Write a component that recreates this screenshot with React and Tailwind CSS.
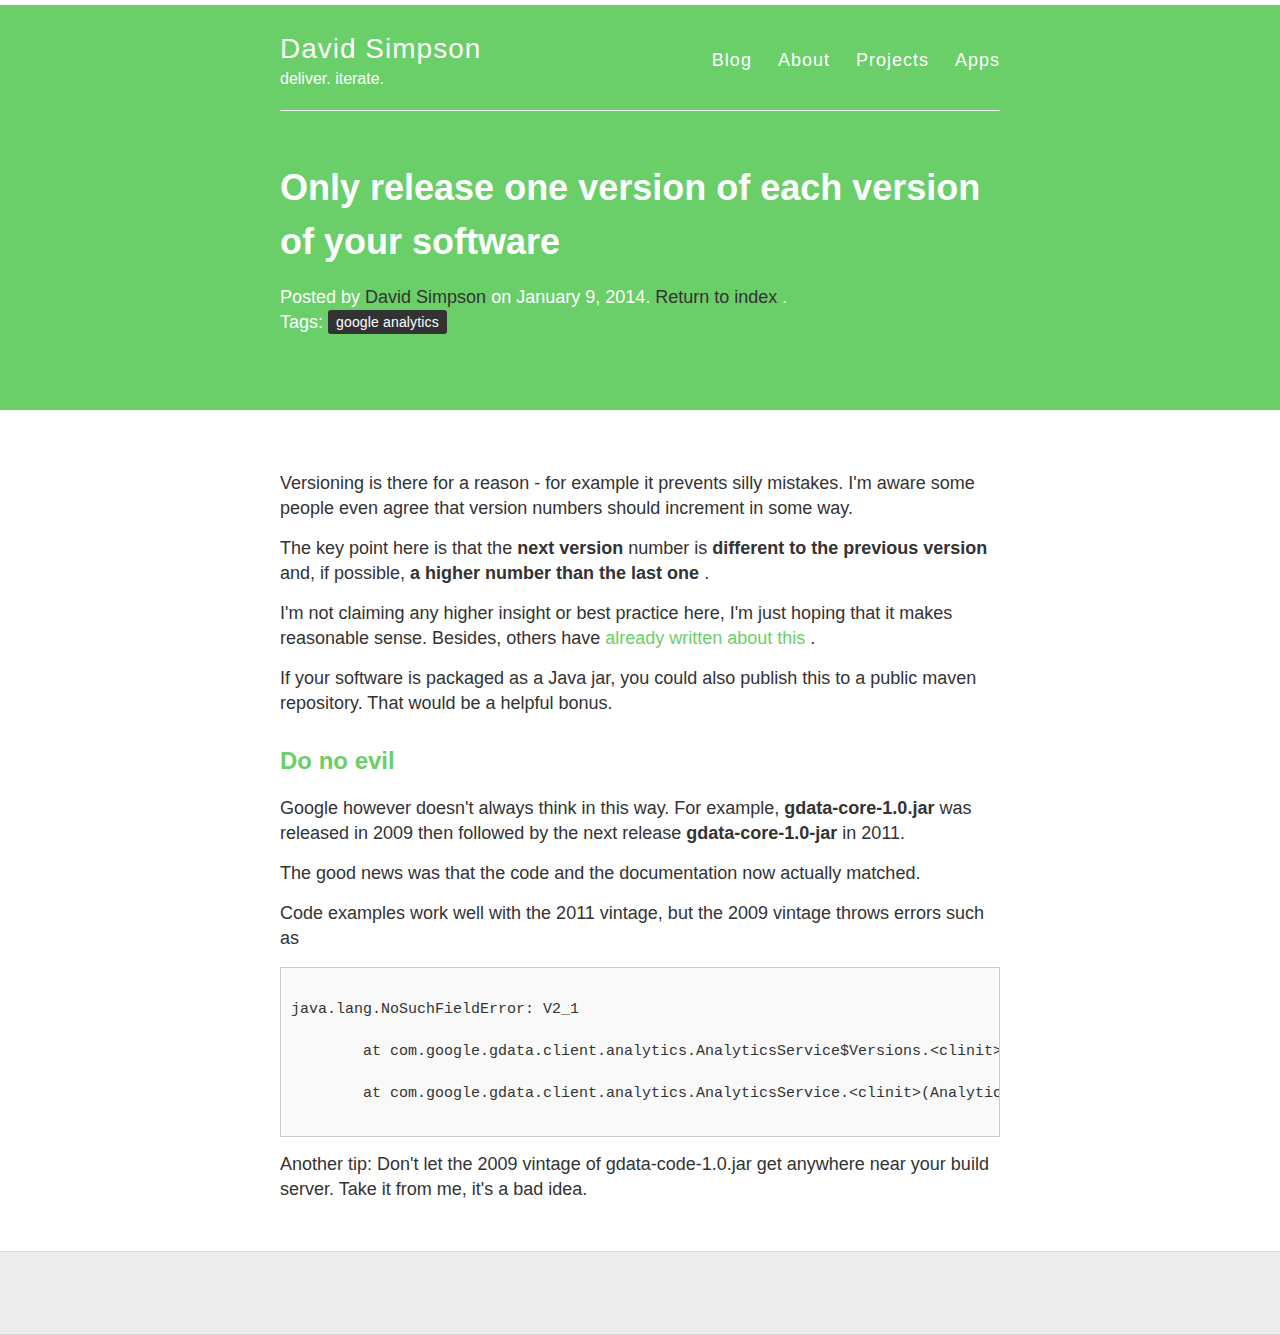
export default function App() {
  const sans = { fontFamily: '"Liberation Sans", Arial, sans-serif' };
  return (
    <div className="min-h-[1335px] bg-white pt-[5px] text-[#333]" style={sans}>
      <div className="bg-[#6acf69]">
        <div className="mx-auto w-[720px] pt-[24px] pb-[75px]">
          <div className="flex items-start justify-between border-b border-white pb-[21px]">
            <div>
              <div className="text-[28px] leading-[40px] tracking-[1px] text-white">David Simpson</div>
              <div className="text-[16px] leading-[20px] text-white">deliver. iterate.</div>
            </div>
            <nav className="mt-[19px] flex gap-[26px] text-[18px] leading-[24px] tracking-[1px] text-white">
              <a>Blog</a>
              <a>About</a>
              <a>Projects</a>
              <a>Apps</a>
            </nav>
          </div>
          <h1 className="mt-[50px] text-[36px] font-bold leading-[54px] text-white">
            Only release one version of each version of your software
          </h1>
          <div className="mt-[16px] text-[18px] leading-[25px] text-white">
            <div>
              Posted by <a className="text-[#333]">David Simpson</a> on January 9, 2014.{' '}
              <a className="text-[#333]">Return to index</a> .
            </div>
            <div className="flex items-center">
              <span>Tags:</span>
              <span className="ml-[5px] -mt-[1px] rounded-[3px] bg-[#333] px-[8px] text-[14px] leading-[24px] tracking-[0.15px] text-white">
                google analytics
              </span>
            </div>
          </div>
        </div>
      </div>

      <div className="mx-auto w-[720px] pt-[61px] pb-[49px] text-[18px] leading-[25px]">
        <p className="mb-[15px]">
          Versioning is there for a reason - for example it prevents silly mistakes. I'm aware some people even agree that version numbers should increment in some way.
        </p>
        <p className="mb-[15px]">
          The key point here is that the <strong>next version</strong> number is <strong>different to the previous version</strong> and, if possible, <strong>a higher number than the last one</strong> .
        </p>
        <p className="mb-[15px]">
          I'm not claiming any higher insight or best practice here, I'm just hoping that it makes reasonable sense. Besides, others have <a className="text-[#6acf69]">already written about this</a> .
        </p>
        <p className="mb-[15px]">
          If your software is packaged as a Java jar, you could also publish this to a public maven repository. That would be a helpful bonus.
        </p>
        <h2 className="mt-[30px] mb-[20px] text-[24px] font-bold leading-[30px] text-[#6acf69]">Do no evil</h2>
        <p className="mb-[15px]">
          Google however doesn't always think in this way. For example, <strong>gdata-core-1.0.jar</strong> was released in 2009 then followed by the next release <strong>gdata-core-1.0-jar</strong> in 2011.
        </p>
        <p className="mb-[15px]">The good news was that the code and the documentation now actually matched.</p>
        <p className="mb-[16px]">
          Code examples work well with the 2011 vintage, but the 2009 vintage throws errors such as
        </p>
        <pre
          className="mb-[15px] overflow-hidden border border-[#ccc] bg-[#f9f9f9] px-[10px] pt-[10px] pb-[11px] text-[15px] leading-[21px] text-[#333]"
          style={{ fontFamily: '"Liberation Mono", "Courier New", monospace', tabSize: 8 }}
        >
{`
java.lang.NoSuchFieldError: V2_1

\tat com.google.gdata.client.analytics.AnalyticsService$Versions.<clinit>(AnalyticsService.java:61)

\tat com.google.gdata.client.analytics.AnalyticsService.<clinit>(AnalyticsService.java:81)

`}
        </pre>
        <p>
          Another tip: Don't let the 2009 vintage of gdata-code-1.0.jar get anywhere near your build server. Take it from me, it's a bad idea.
        </p>
      </div>

      <div className="h-[84px] border-y border-[#d6d6d6] bg-[#ededed]"></div>
    </div>
  );
}
